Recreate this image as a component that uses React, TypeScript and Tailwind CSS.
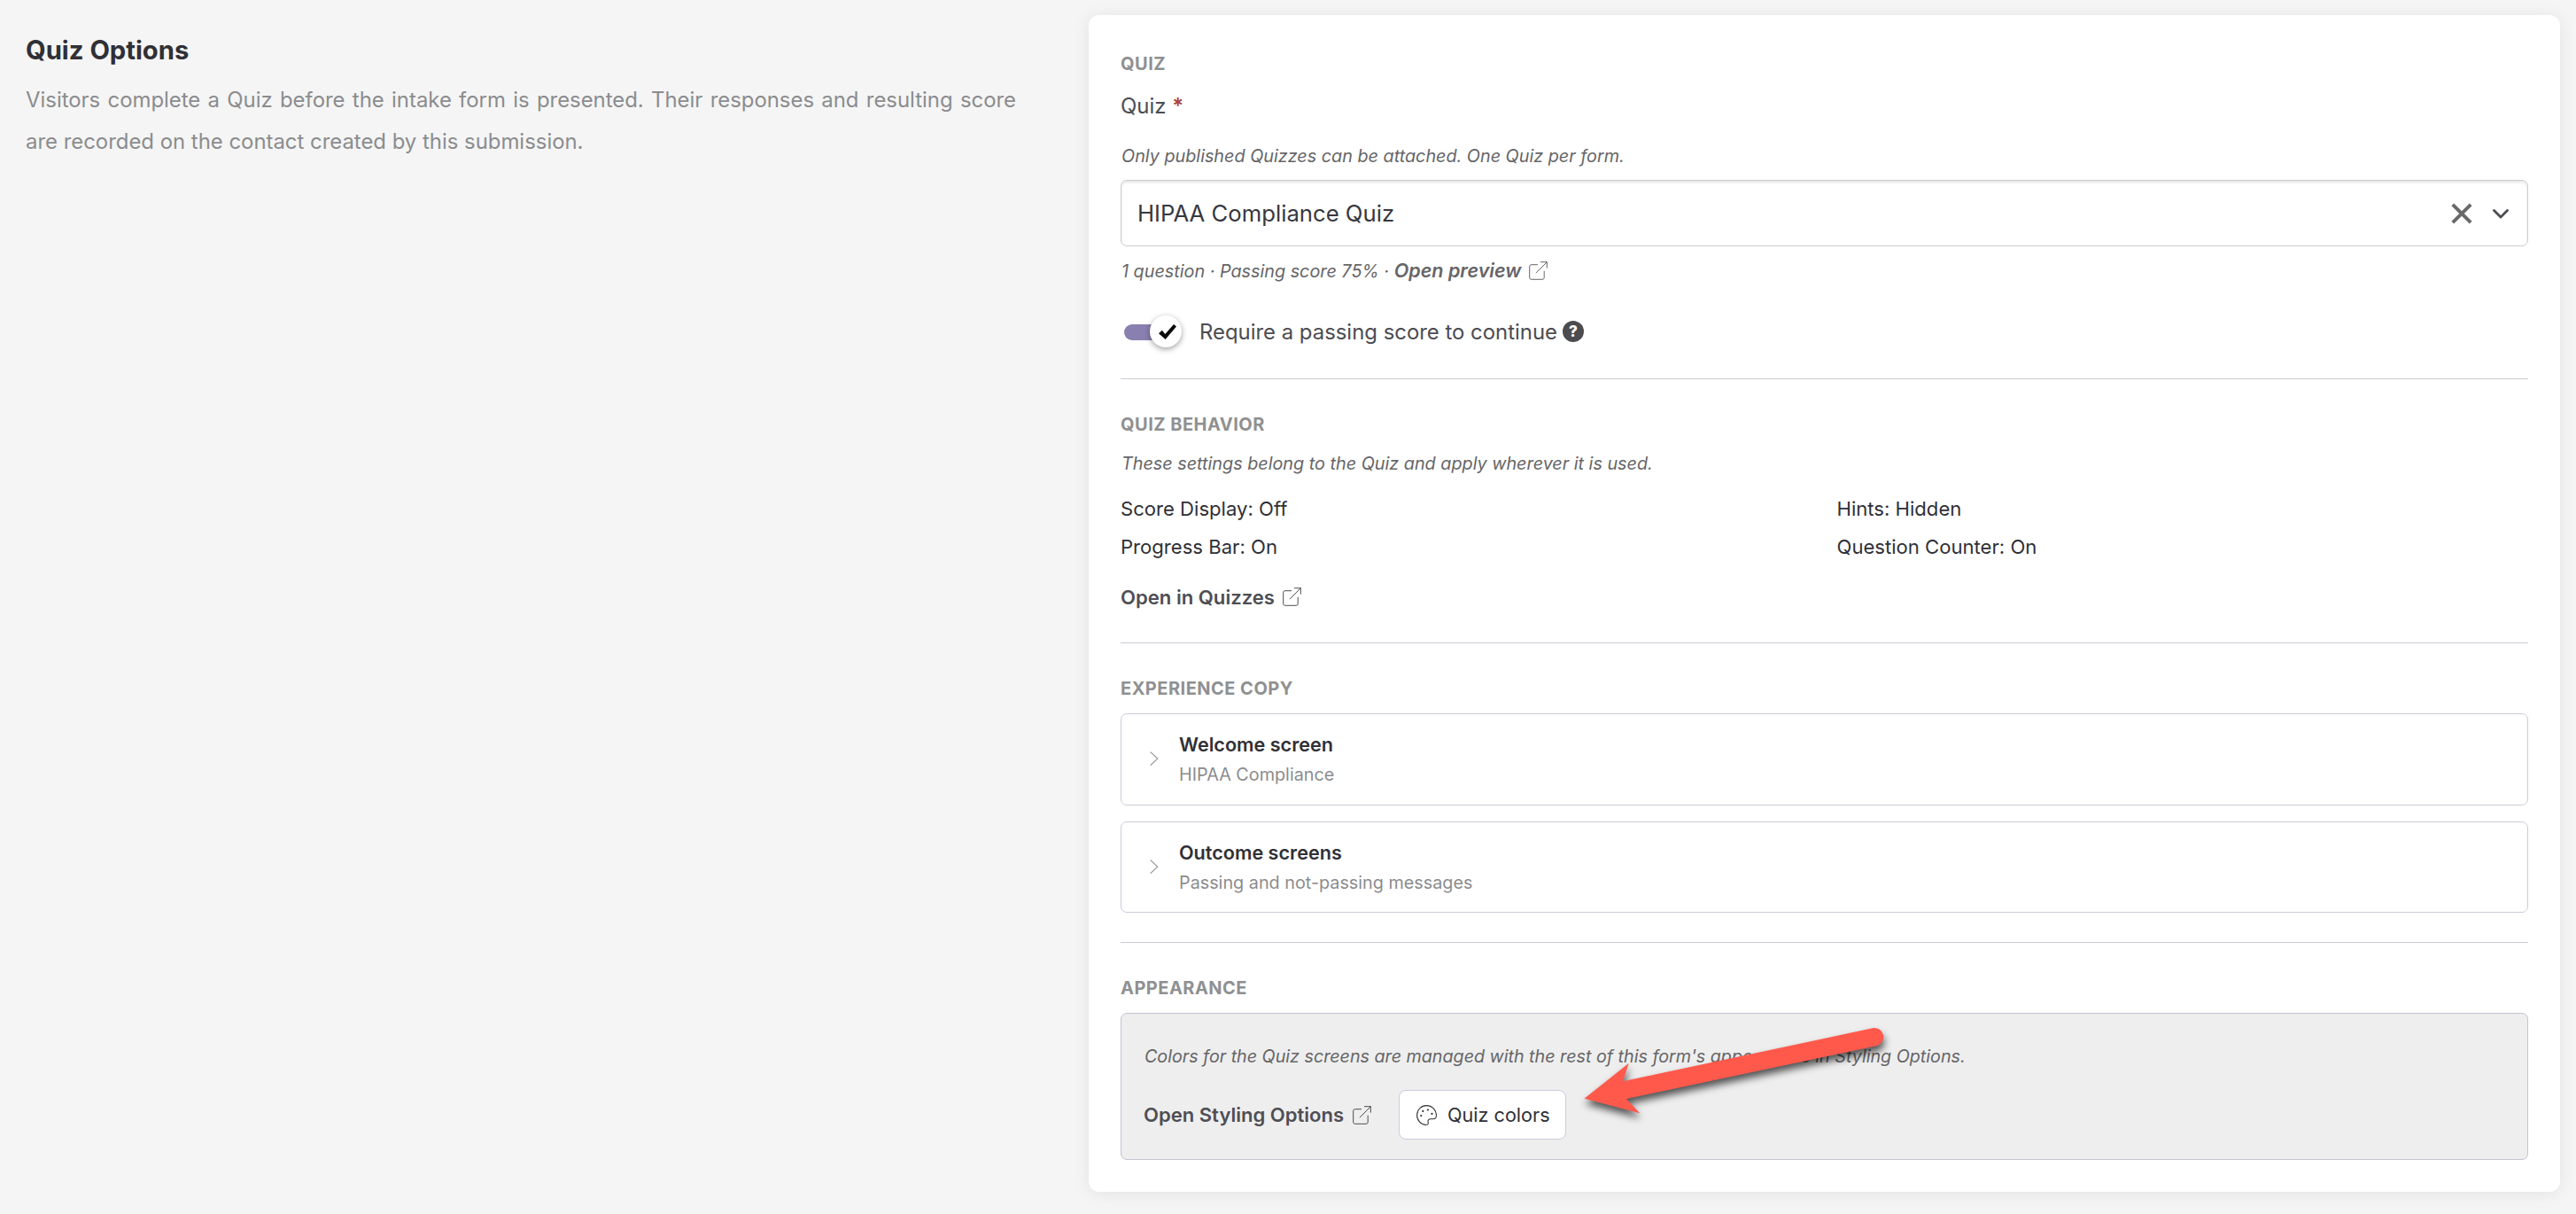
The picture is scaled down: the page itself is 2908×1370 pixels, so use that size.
import type { ReactNode } from "react";

function ExternalIcon({ className = "" }: { className?: string }) {
  return (
    <svg
      viewBox="0 0 21 21"
      className={`h-[21px] w-[21px] shrink-0 ${className}`}
      fill="none"
      stroke="currentColor"
      strokeWidth="1"
      strokeLinecap="round"
      strokeLinejoin="round"
    >
      <path d="M9.6 3.7H2.7a2 2 0 0 0-2 2v12.6a2 2 0 0 0 2 2h12.5a2 2 0 0 0 2-2v-7.1" />
      <path d="M13.4.7h6.9v6.5M20.2.8 8.2 12.9" />
    </svg>
  );
}

function PaletteIcon() {
  return (
    <svg viewBox="0 0 23 23" className="h-[23px] w-[23px] shrink-0" fill="none">
      <path
        d="M11.4.6C5.4.6.6 5.4.6 11.4c0 5.9 4.5 10.9 10.4 11 2 0 2.7-1.4 2.2-2.8-.8-2.2.6-3.9 2.8-3.9h2.6c2.3 0 3.8-1.4 3.8-3.7C22.4 5.4 17.5.6 11.4.6Z"
        stroke="#303036"
        strokeWidth="1.05"
      />
      <g fill="#303036">
        <circle cx="5.3" cy="12.1" r="1.1" />
        <circle cx="7.3" cy="6.9" r="1.1" />
        <circle cx="12.9" cy="5.5" r="1.1" />
        <circle cx="17.5" cy="9.9" r="1.1" />
      </g>
    </svg>
  );
}

function SectionTitle({ children, className = "" }: { children: ReactNode; className?: string }) {
  return (
    <h2 className={`text-[20px] leading-[24px] font-bold tracking-[0.48px] text-[#8f9092] uppercase ${className}`}>
      {children}
    </h2>
  );
}

function Hint({ children, className = "" }: { children: ReactNode; className?: string }) {
  return (
    <p className={`pl-px text-[19.8px] leading-[24px] text-[#666668] italic ${className}`}>{children}</p>
  );
}

function Divider({ className = "" }: { className?: string }) {
  return <div className={`h-px bg-[#cbcbd6] ${className}`} />;
}

function CopyRow({ title, sub, className = "" }: { title: string; sub: string; className?: string }) {
  return (
    <div className={`flex rounded-[7px] border border-[#cbcbda] pl-8 ${className}`}>
      <svg
        viewBox="0 0 10 16"
        className="mt-[42px] h-4 w-[10px] shrink-0"
        fill="none"
        stroke="#8f9092"
        strokeWidth="1.1"
        strokeLinecap="round"
        strokeLinejoin="round"
      >
        <path d="m1 .8 7.8 7.3L1 15.3" />
      </svg>
      <div className="ml-[23px] flex flex-col pt-[21px]">
        <span className="text-[21.6px] leading-[26px] font-semibold text-[#303036]">{title}</span>
        <span className="mt-[9px] text-[19.8px] leading-[24px] text-[#8b8c8e]">{sub}</span>
      </div>
    </div>
  );
}

export default function App() {
  return (
    <div className="flex h-[1370px] w-[2908px] items-start overflow-hidden bg-[#f5f5f5] font-['Inter',sans-serif]">
      <aside className="w-[1229px] shrink-0 pt-[39px] pl-[29px]">
        <h1 className="text-[29.2px] leading-[35px] font-bold text-[#303036]">Quiz Options</h1>
        <p className="mt-[15px] w-[1118px] text-justify text-[23.9px] leading-[47px] text-[#8b8c8e]">
          Visitors complete a Quiz before the intake form is presented. Their responses and resulting score are
          recorded on the contact created by this submission.
        </p>
      </aside>

      <main className="mt-[17px] flex h-[1328px] w-[1661px] shrink-0 flex-col rounded-xl bg-white px-9 pt-[43px] shadow-[0_2px_20px_rgba(0,0,0,0.08)]">
        <SectionTitle>Quiz</SectionTitle>
        <label className="mt-[21px] text-[24px] leading-[29px] text-[#4c4c52]">
          Quiz <span className="font-semibold text-[#a94442]">*</span>
        </label>
        <Hint className="mt-[30px]">Only published Quizzes can be attached. One Quiz per form.</Hint>

        <div className="mt-[15px] flex h-[75px] items-center rounded-[7px] border border-[#cccccf] pr-[21px] pl-[18px] shadow-[inset_0_2px_3px_rgba(0,0,0,0.1)]">
          <span className="mt-px flex-1 text-[25.7px] leading-[32px] text-[#38383e]">HIPAA Compliance Quiz</span>
          <svg viewBox="0 0 24 24" className="h-6 w-6" stroke="#6a6a6c" strokeWidth="4">
            <path d="M1.800 1.800 22.200 22.200M22.200 1.800 1.800 22.200" />
          </svg>
          <svg
            viewBox="0 0 18 11"
            className="mt-px ml-[23px] h-[11px] w-[18px]"
            fill="none"
            stroke="#4c4c52"
            strokeWidth="2.8"
            strokeLinecap="round"
            strokeLinejoin="round"
          >
            <path d="m1.5 1.5 7.5 7.6 7.5-7.6" />
          </svg>
        </div>

        <div className="mt-[14px] flex h-[26px] items-baseline pl-px text-[#666668]">
          <span className="text-[19.8px] leading-[24px] whitespace-pre italic">{"1 question · Passing score 75% · "}</span>
          <span className="text-[21.55px] leading-[26px] font-semibold italic">Open preview</span>
          <ExternalIcon className="mt-[3px] ml-[9px] self-start" />
        </div>

        <div className="mt-[38px] flex h-9 items-start pl-1">
          <div className="flex h-9 w-[65px] items-center">
            <div className="mt-[2px] h-[18px] w-[45px] rounded-full bg-[#8a80b0]" />
            <div className="-ml-[15px] flex h-9 w-9 shrink-0 items-center justify-center rounded-full bg-white pl-[3px] shadow-[0_2px_6px_rgba(0,0,0,0.38)]">
              <svg viewBox="0 0 20 17" className="h-[17px] w-5">
                <path d="M0 10.200 3.900 6.800 7.300 10.900 17 0l3 2.600L7.600 17Z" fill="#0a0a0a" />
              </svg>
            </div>
          </div>
          <span className="mt-1 ml-[20px] text-[23.9px] leading-[29px] text-[#4c4c52]">
            Require a passing score to continue
          </span>
          <span className="mt-[6px] ml-[6px] flex h-6 w-6 items-center justify-center rounded-full bg-[#4c4c50] text-[17px] leading-none font-extrabold text-white">
            ?
          </span>
        </div>

        <Divider className="mt-[35px]" />

        <SectionTitle className="mt-[39px]">Quiz Behavior</SectionTitle>
        <Hint className="mt-[20px]">These settings belong to the Quiz and apply wherever it is used.</Hint>
        <div className="mt-[26px] grid grid-cols-2 gap-x-[28px] gap-y-[17px] text-[22.1px] leading-[26px] text-[#303036]">
          <span>Score Display: Off</span>
          <span>Hints: Hidden</span>
          <span>Progress Bar: On</span>
          <span>Question Counter: On</span>
        </div>
        <div className="mt-[31px] flex h-[26px] items-start text-[22.1px] leading-[26px] font-semibold text-[#4e4e54]">
          Open in Quizzes
          <ExternalIcon className="mt-[2px] ml-[9px]" />
        </div>

        <Divider className="mt-[38px]" />

        <SectionTitle className="mt-[39px]">Experience Copy</SectionTitle>
        <CopyRow className="mt-4 h-[104px]" title="Welcome screen" sub="HIPAA Compliance" />
        <CopyRow className="mt-[18px] h-[103px]" title="Outcome screens" sub="Passing and not-passing messages" />

        <Divider className="mt-[33px]" />

        <SectionTitle className="mt-[39px]">Appearance</SectionTitle>
        <div className="relative mt-4 h-[166px] rounded-[7px] border border-[#c3c3d4] bg-[#eeeeee] pt-9 pl-[25px]">
          <p className="pl-px text-[19.7px] leading-[24px] text-[#666668] italic">
            Colors for the Quiz screens are managed with the rest of this form's appearance in Styling Options.
          </p>
          <div className="mt-[26px] flex h-14 items-center">
            <span className="text-[22.05px] leading-[26px] font-semibold text-[#4e4e54]">Open Styling Options</span>
            <ExternalIcon className="mt-px ml-[10px] text-[#4e4e54]" />
            <button className="ml-[31px] flex h-14 w-[189px] items-center rounded-lg border border-[#cbcbe0] bg-white pl-[19px] text-[21.6px] leading-[26px] whitespace-nowrap text-[#303036]">
              <PaletteIcon />
              <span className="ml-[12px]">Quiz colors</span>
            </button>
          </div>

          {/* Callout arrow drawn over the panel, pointing at the button */}
          <svg
            viewBox="1766 1144 400 140"
            className="pointer-events-none absolute top-0 left-[500px] h-[140px] w-[400px] overflow-visible drop-shadow-[1px_6px_4px_rgba(0,0,0,0.65)]"
          >
            <path
              d="M1788.500 1239.800 1838.800 1199.700 1832 1220.300 2113.800 1160.200A10.200 10.200 0 0 1 2118.200 1180.200L1836 1240 1851.200 1256.300Z"
              fill="#ff594c"
            />
          </svg>
        </div>
      </main>
    </div>
  );
}
